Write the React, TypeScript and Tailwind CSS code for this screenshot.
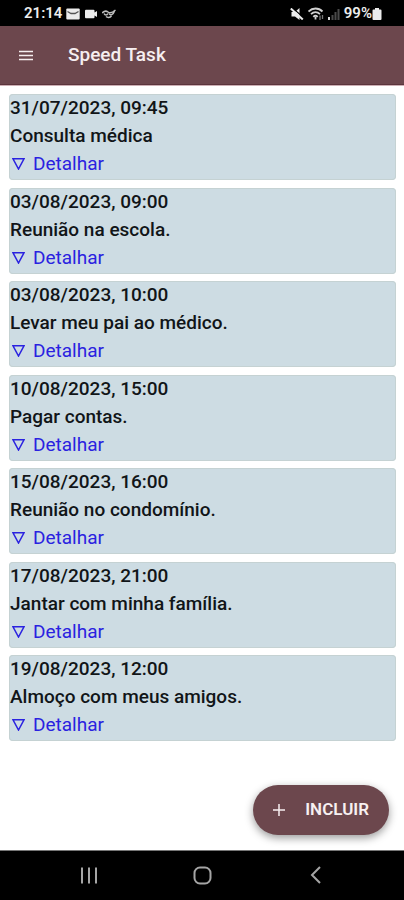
import React from 'react';

const tasks = [
  { date: '31/07/2023, 09:45', title: 'Consulta médica' },
  { date: '03/08/2023, 09:00', title: 'Reunião na escola.' },
  { date: '03/08/2023, 10:00', title: 'Levar meu pai ao médico.' },
  { date: '10/08/2023, 15:00', title: 'Pagar contas.' },
  { date: '15/08/2023, 16:00', title: 'Reunião no condomínio.' },
  { date: '17/08/2023, 21:00', title: 'Jantar com minha família.' },
  { date: '19/08/2023, 12:00', title: 'Almoço com meus amigos.' },
];

const StatusBar = () => (
  <div className="h-[26px] px-6 pr-[22px] pt-px flex items-center justify-between bg-black text-[#ececec] text-[15px] font-semibold">
    <div className="flex items-center gap-1">
      <span>21:14</span>
      <svg className="w-[14px] h-3" viewBox="0 0 14 12">
        <rect x="0.3" y="0.5" width="13.4" height="11" rx="1" fill="currentColor" />
        <path d="M1.5 3.5 5 5.500h4l3.500-2" stroke="#555" strokeWidth="1.3" fill="none" />
      </svg>
      <svg className="w-[14px] h-3" viewBox="0 0 14 12">
        <path d="M2 1.800h7.500a1 1 0 0 1 1 1v1.600l2.500-1.400v6l-2.500-1.400v1.600a1 1 0 0 1-1 1H2a1 1 0 0 1-1-1V2.800a1 1 0 0 1 1-1z" fill="currentColor" />
      </svg>
      <svg className="w-[14px] h-3" viewBox="0 0 14 12" fill="none" stroke="#bdbdbd" strokeWidth="1.5">
        <path d="M0 5c2-2 4-2.500 6-1s4 1 7.500-2" />
        <path d="M2 5.500c1 2 3 2 4 0M7 5.500c1 2 4 2 5.500-2.500M4 8.500c1.500 1.300 4 1.300 5.500-0.500" />
      </svg>
    </div>
    <div className="flex items-center gap-1">
      <svg className="w-[14px] h-3" viewBox="0 0 14 12">
        <path d="M1.500 4h3.500l4.500-4v12L5 8.500H1.500z" fill="currentColor" />
        <path d="M2.500 0 13.500 9.500" stroke="#000" strokeWidth="1.200" />
        <path d="M0.800 0.500 12.800 11.500" stroke="currentColor" strokeWidth="2" />
      </svg>
      <svg className="w-4 h-[14px]" viewBox="0 0 16 14" fill="none" stroke="#d0d0d0" strokeWidth="1.800">
        <path d="M0.500 4.500c4-4 10-4 14 0M3 7.200c2.700-2.600 6.300-2.600 9 0M5.300 9.800c1.300-1.300 3-1.300 4.400 0" />
        <path d="M7.500 10v2.500" />
        <path d="M12 8.500v4.500M14.500 8v4" stroke="#777" strokeWidth="1.300" />
      </svg>
      <svg className="w-3 h-3" viewBox="0 0 12 12">
        <rect x="0" y="9" width="2" height="3" fill="#ddd" />
        <path d="M3.500 12V7h2v5zM6.500 12V4h2v8zM9.500 12V1h2v11z" fill="#4a4a4a" />
      </svg>
      <div className="flex items-center">
        <span>99%</span>
        <svg className="w-[10px] h-3" viewBox="0 0 10 12" fill="currentColor">
          <path d="M3 0h4v1.500h1.500a1 1 0 0 1 1 1V11a1 1 0 0 1-1 1h-7a1 1 0 0 1-1-1V2.500a1 1 0 0 1 1-1H3z" />
        </svg>
      </div>
    </div>
  </div>
);

const TaskCard = ({ date, title }: { date: string; title: string }) => (
  <li className="pl-px pb-0.5 rounded-sm bg-[#cddce3] shadow-[inset_0_0_0_1px_#c5d2d3] text-[#111518] text-[19px] leading-7 font-medium">
    <p>{date}</p>
    <h2>{title}</h2>
    <button type="button" className="pl-0.5 flex items-center gap-2 font-normal text-[#2a22e0]">
      <svg className="w-[13px] h-3" viewBox="0 0 13 12" fill="none" stroke="currentColor" strokeWidth="1.500">
        <path d="M1 0.800h11L6.500 11z" />
      </svg>
      Detalhar
    </button>
  </li>
);

const NavBar = () => (
  <nav className="h-[50px] px-8 border-t border-[#777] bg-black text-[#a5a5a5] flex items-center justify-between">
    <button type="button" aria-label="Recentes" className="flex-1 flex justify-center">
      <svg className="w-5 h-5" viewBox="0 0 20 20" stroke="currentColor" strokeWidth="2">
        <path d="M3 1.500v16M10 1.500v16M17 1.500v16" />
      </svg>
    </button>
    <button type="button" aria-label="Início" className="flex-1 flex justify-center">
      <svg className="w-5 h-5" viewBox="0 0 20 20" fill="none" stroke="currentColor" strokeWidth="2">
        <rect x="2.500" y="1.500" width="16" height="16" rx="5.500" />
      </svg>
    </button>
    <button type="button" aria-label="Voltar" className="flex-1 flex justify-center">
      <svg className="w-5 h-5" viewBox="0 0 20 20" fill="none" stroke="currentColor" strokeWidth="2">
        <path d="M15 1 7 9l8 8" />
      </svg>
    </button>
  </nav>
);

const App = () => {
  return (
    <div className="min-h-screen flex flex-col bg-white font-['Roboto',sans-serif]">
      <StatusBar />
      <header className="h-[59px] px-[19px] flex items-center gap-[35px] bg-[#6c474d] text-[#f6eef0] border-b border-[#5b353d]">
        <button type="button" aria-label="Menu">
          <svg className="w-[14px] h-3" viewBox="0 0 14 12" stroke="currentColor" strokeWidth="1.600">
            <path d="M0 2.500h14M0 6.500h14M0 10.500h14" />
          </svg>
        </button>
        <h1 className="text-[19px] leading-6 font-medium">Speed Task</h1>
      </header>

      <main className="flex-1 flex flex-col border-t border-[#cdb0b5]">
        <ul className="flex-1 pl-[9px] pr-2 pt-2 flex flex-col justify-between">
          {tasks.map((task) => (
            <TaskCard key={task.date} {...task} />
          ))}
        </ul>
        <button
          type="button"
          className="self-end mt-11 mr-[15px] mb-[15px] h-[50px] px-5 flex items-center gap-5 rounded-full bg-[#6c474d] text-[#f7f0f1] text-[17px] font-semibold shadow-[0_3px_8px_rgba(0,0,0,0.4)]"
        >
          <svg className="w-3 h-3" viewBox="0 0 12 12" stroke="currentColor" strokeWidth="1.500">
            <path d="M6 0v12M0 6h12" />
          </svg>
          INCLUIR
        </button>
      </main>

      <NavBar />
    </div>
  );
};

export default App;
